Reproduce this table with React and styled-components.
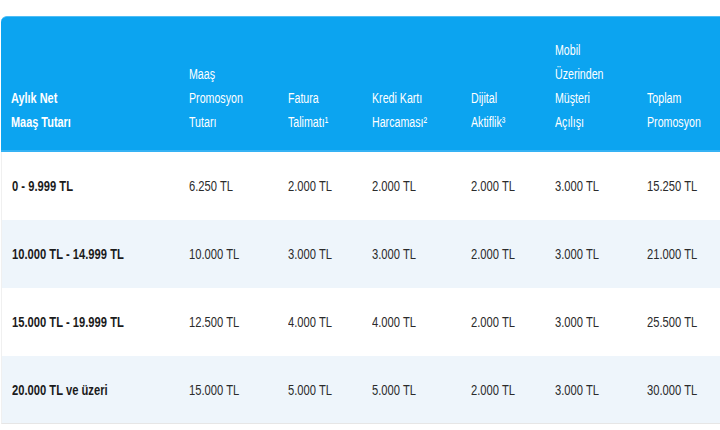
import styled, { createGlobalStyle } from "styled-components";

const GlobalStyle = createGlobalStyle`
  html, body {
    margin: 0;
    padding: 0;
    background: #ffffff;
    overflow: hidden;
  }
  body {
    font-family: "Liberation Sans", Arial, sans-serif;
  }
`;

const Page = styled.div`
  width: 720px;
  height: 430px;
  padding: 16px 0 0 1px;
  box-sizing: border-box;
  overflow: hidden;
`;

const Table = styled.table`
  width: 724px;
  border-collapse: separate;
  border-spacing: 0;
  table-layout: fixed;
`;

const HeadCell = styled.th`
  background: #0ca4f0;
  color: #ffffff;
  font-weight: ${(p) => (p.$bold ? 700 : 400)};
  font-size: 14px;
  line-height: 24px;
  text-align: left;
  vertical-align: bottom;
  padding: 0 0 16px 10px;
  height: 136px;
  box-sizing: border-box;
  border-top: 1px solid #4fbdf5;
  border-bottom: 2px solid #35b2f4;
  white-space: nowrap;
  &:first-child {
    border-top-left-radius: 6px;
  }
`;

/* the reference uses a condensed face; squeeze the available sans */
const Narrow = styled.span`
  display: ${(p) => (p.$block ? "block" : "inline-block")};
  transform: scaleX(${(p) => p.$scale || 0.8});
  transform-origin: left center;
`;

const Row = styled.tr`
  background: ${(p) => (p.$alt ? "#eef5fb" : "#ffffff")};
`;

const Cell = styled.td`
  height: 68px;
  box-sizing: border-box;
  padding: 0 0 0 10px;
  font-size: 14px;
  font-weight: ${(p) => (p.$bold ? 700 : 400)};
  color: ${(p) => (p.$bold ? "#1b1b1b" : "#2b2b2b")};
  vertical-align: middle;
  white-space: nowrap;
  &:first-child {
    border-left: 1px solid #f0f0f0;
  }
`;

const LastRow = styled(Row)`
  & > td {
    border-bottom: 1px solid #e6e6e6;
  }
`;

const widths = [178, 99, 84, 99, 84, 92, 88];

const headers = [
  ["Aylık Net", "Maaş Tutarı"],
  ["Maaş", "Promosyon", "Tutarı"],
  ["Fatura", "Talimatı¹"],
  ["Kredi Kartı", "Harcaması²"],
  ["Dijital", "Aktiflik³"],
  ["Mobil", "Üzerinden", "Müşteri", "Açılışı"],
  ["Toplam", "Promosyon"],
];

const rows = [
  ["0 - 9.999 TL", "6.250 TL", "2.000 TL", "2.000 TL", "2.000 TL", "3.000 TL", "15.250 TL"],
  ["10.000 TL - 14.999 TL", "10.000 TL", "3.000 TL", "3.000 TL", "2.000 TL", "3.000 TL", "21.000 TL"],
  ["15.000 TL - 19.999 TL", "12.500 TL", "4.000 TL", "4.000 TL", "2.000 TL", "3.000 TL", "25.500 TL"],
  ["20.000 TL ve üzeri", "15.000 TL", "5.000 TL", "5.000 TL", "2.000 TL", "3.000 TL", "30.000 TL"],
];

export default function App() {
  return (
    <Page>
      <GlobalStyle />
      <Table>
        <colgroup>
          {widths.map((w, i) => (
            <col key={i} style={{ width: w }} />
          ))}
        </colgroup>
        <thead>
          <tr>
            {headers.map((lines, i) => (
              <HeadCell key={i} $bold={i === 0}>
                {lines.map((l, j) => (
                  <Narrow key={j} $block $scale={i === 0 ? 0.78 : 0.76}>
                    {l}
                  </Narrow>
                ))}
              </HeadCell>
            ))}
          </tr>
        </thead>
        <tbody>
          {rows.map((r, i) => {
            const R = i === rows.length - 1 ? LastRow : Row;
            return (
              <R key={i} $alt={i % 2 === 1}>
                {r.map((v, j) => (
                  <Cell key={j} $bold={j === 0}>
                    <Narrow $scale={0.8}>{v}</Narrow>
                  </Cell>
                ))}
              </R>
            );
          })}
        </tbody>
      </Table>
    </Page>
  );
}
